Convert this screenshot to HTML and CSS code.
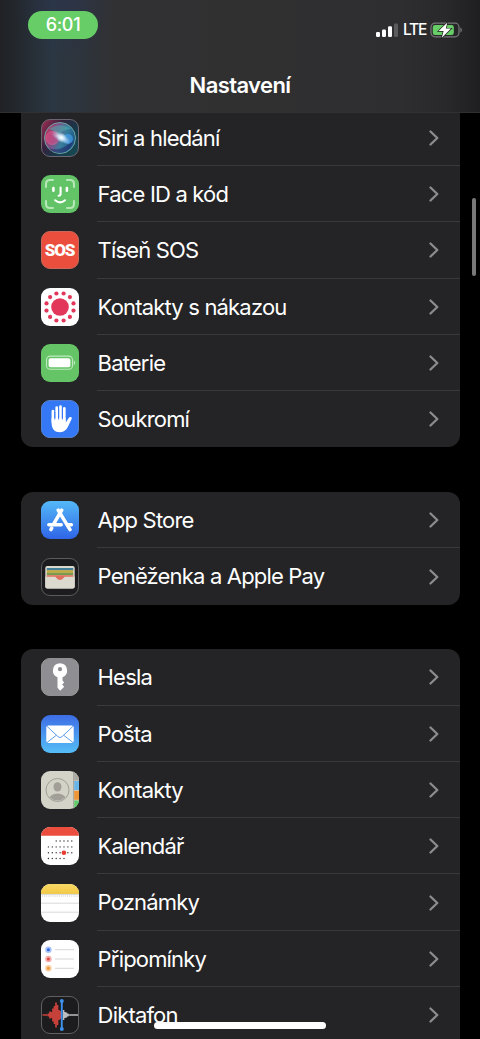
FILE: index.html
```html
<!DOCTYPE html>
<html lang="cs">

<head>
    <meta charset="UTF-8">
    <meta name="viewport" content="width=device-width, initial-scale=1.0">
    <title>Nastavení</title>
    <link rel="stylesheet" href="styles.css">
</head>

<body>
    <header class="header">
        <div class="status-bar">
            <span class="time">6:01</span>
            <div class="status-icons">
                <svg class="signal" width="22" height="15" viewBox="0 0 22 15">
                    <rect x="0" y="9" width="4" height="5" rx="1.2" fill="#fff" />
                    <rect x="6" y="6.5" width="4" height="7.5" rx="1.2" fill="#fff" />
                    <rect x="12" y="3.3" width="4" height="10.7" rx="1.2" fill="#fff" />
                    <rect x="18" y="0.5" width="4" height="13.5" rx="1.2" fill="#5b5b5e" />
                </svg>
                <span class="network">LTE</span>
                <svg width="33" height="18" viewBox="0 0 33 18">
                    <rect x="1" y="2.2" width="28" height="13.6" rx="4" fill="none" stroke="#77777a" stroke-width="1.2" />
                    <path d="M30.4 6.5c2 .8 2 4.2 0 5z" fill="#77777a" />
                    <rect x="2.8" y="4" width="21" height="10" rx="2.2" fill="#67ce67" />
                    <path d="M17.4 1.5L8.6 10h5l-1.8 6.7L21 7.6h-5.2z" fill="#fff" stroke="#222" stroke-width="1.4" paint-order="stroke" />
                </svg>
            </div>
        </div>
        <h1 class="title">Nastavení</h1>
    </header>

    <main class="settings">
        <section class="group">
            <a class="row">
                <svg class="icon" viewBox="0 0 38 38">
                    <defs>
                        <linearGradient id="siri-bg" x1="0" y1="0" x2="1" y2=".7">
                            <stop offset="0" stop-color="#a72e53" />
                            <stop offset=".4" stop-color="#35223e" />
                            <stop offset=".7" stop-color="#183747" />
                            <stop offset="1" stop-color="#174751" />
                        </linearGradient>
                        <linearGradient id="siri-orb" x1="0" y1=".3" x2="1" y2=".7">
                            <stop offset="0" stop-color="#bd315c" />
                            <stop offset=".35" stop-color="#77548a" />
                            <stop offset=".6" stop-color="#387f9c" />
                            <stop offset="1" stop-color="#164c82" />
                        </linearGradient>
                        <radialGradient id="siri-glow">
                            <stop offset="0" stop-color="#fff" />
                            <stop offset=".3" stop-color="#e1f3ff" stop-opacity=".8" />
                            <stop offset="1" stop-color="#b4d6ed" stop-opacity="0" />
                        </radialGradient>
                    </defs>
                    <rect x=".5" y=".5" width="37" height="37" rx="8.5" fill="url(#siri-bg)" stroke="#6c6573" />
                    <circle cx="19" cy="19" r="15.5" fill="url(#siri-orb)" stroke="#6ba3a3" stroke-width="1" />
                    <path d="M7 29c8 3 17 1 25-8-1 8-7 13-13 13-5 0-9-2-12-5z" fill="#231c62" opacity=".5" />
                    <path d="M8 10c7-5 15-5 22 0-6 0-9 2-12 7-3-4-6-6-10-7z" fill="#4caeae" opacity=".55" />
                    <circle cx="11.5" cy="19" r="6.5" fill="#ea4b87" fill-opacity=".5" stroke="#d66c95" stroke-width=".6" />
                    <circle cx="27" cy="20" r="5" fill="#4aa5f3" opacity=".65" />
                    <ellipse cx="20" cy="18.5" rx="11" ry="4.5" transform="rotate(30 20 18.5)" fill="url(#siri-glow)" />
                    <circle cx="20.5" cy="18.5" r="5" fill="url(#siri-glow)" />
                </svg>
                <span class="label">Siri a hledání</span>
                <svg class="chevron" viewBox="0 0 10 16"><path d="M1.5 1.5L8.3 8l-6.8 6.5" /></svg>
            </a>
            <a class="row">
                <svg class="icon" viewBox="0 0 38 38">
                    <rect width="38" height="38" rx="9" fill="#62c466" />
                    <g fill="none" stroke-linecap="round">
                        <path d="M5 12V9q0-4 4-4h3M26 5h3q4 0 4 4v3M33 26v3q0 4-4 4h-3M12 33H9q-4 0-4-4v-3" stroke="#b6e7b7" stroke-width="2.1" />
                        <path d="M12.4 13v2.8M25.9 13v2.8" stroke="#fff" stroke-width="2.6" />
                        <path d="M19.6 12.5v6.2q0 2-2 2M14.2 25.3q4.9 4.3 9.8 0" stroke="#fff" stroke-width="2.1" />
                    </g>
                </svg>
                <span class="label">Face ID a kód</span>
                <svg class="chevron" viewBox="0 0 10 16"><path d="M1.5 1.5L8.3 8l-6.8 6.5" /></svg>
            </a>
            <a class="row">
                <div class="icon sos">SOS</div>
                <span class="label">Tíseň SOS</span>
                <svg class="chevron" viewBox="0 0 10 16"><path d="M1.5 1.5L8.3 8l-6.8 6.5" /></svg>
            </a>
            <a class="row">
                <svg class="icon" viewBox="0 0 38 38">
                    <rect width="38" height="38" rx="9" fill="#fff" />
                    <g fill="#e2375b">
                        <circle cx="19" cy="19" r="8.8" />
                        <circle cx="22.6" cy="5.5" r="2.1" />
                        <circle cx="28.9" cy="9.1" r="2.1" />
                        <circle cx="32.5" cy="15.4" r="2.1" />
                        <circle cx="32.5" cy="22.6" r="2.1" />
                        <circle cx="28.9" cy="28.9" r="2.1" />
                        <circle cx="22.6" cy="32.5" r="2.1" />
                        <circle cx="15.4" cy="32.5" r="2.1" />
                        <circle cx="9.1" cy="28.9" r="2.1" />
                        <circle cx="5.5" cy="22.6" r="2.1" />
                        <circle cx="5.5" cy="15.4" r="2.1" />
                        <circle cx="9.1" cy="9.1" r="2.1" />
                        <circle cx="15.4" cy="5.5" r="2.1" />
                    </g>
                </svg>
                <span class="label">Kontakty s nákazou</span>
                <svg class="chevron" viewBox="0 0 10 16"><path d="M1.5 1.5L8.3 8l-6.8 6.5" /></svg>
            </a>
            <a class="row">
                <svg class="icon" viewBox="0 0 38 38">
                    <rect width="38" height="38" rx="9" fill="#65c466" />
                    <rect x="5.5" y="12.1" width="26" height="13.2" rx="3.8" fill="none" stroke="#c0e9c1" stroke-width="1.1" />
                    <rect x="7.6" y="14.2" width="21.8" height="9" rx="1.8" fill="#fff" />
                    <path d="M32.8 16.5c1.9.7 1.9 3.8 0 4.5z" fill="#c0e9c1" />
                </svg>
                <span class="label">Baterie</span>
                <svg class="chevron" viewBox="0 0 10 16"><path d="M1.5 1.5L8.3 8l-6.8 6.5" /></svg>
            </a>
            <a class="row">
                <svg class="icon" viewBox="0 0 38 38">
                    <rect x=".4" y=".4" width="37.2" height="37.2" rx="8.6" fill="#3478f6" stroke="#6390df" stroke-width=".8" />
                    <g fill="none" stroke="#fff" stroke-width="2.7" stroke-linecap="round">
                        <path d="M11.9 11.2V22M15.7 7.6V20M19.5 6.6V20M23.3 8.3V22" />
                    </g>
                    <path d="M10.6 18h14v4.8l2.6-4.1c.9-1.6 1.8-2 3-1.4.9.4.7 1 .3 1.9l-3.3 7.1c-1.7 3.7-4.2 5.9-8.3 5.9-5.2 0-8.3-3.3-8.3-9z" fill="#fff" />
                    <path d="M13.8 12v7.6M17.6 9v10.5M21.4 9v10.5" stroke="#3478f6" stroke-width=".9" />
                </svg>
                <span class="label">Soukromí</span>
                <svg class="chevron" viewBox="0 0 10 16"><path d="M1.5 1.5L8.3 8l-6.8 6.5" /></svg>
            </a>
        </section>

        <section class="group">
            <a class="row">
                <svg class="icon" viewBox="0 0 38 38">
                    <defs>
                        <linearGradient id="store" x1="0" y1="0" x2="0" y2="1">
                            <stop offset="0" stop-color="#54b9f8" />
                            <stop offset="1" stop-color="#2f65e7" />
                        </linearGradient>
                    </defs>
                    <rect width="38" height="38" rx="9" fill="url(#store)" />
                    <g fill="none" stroke="#fff" stroke-width="3.5" stroke-linecap="round">
                        <path d="M20.7 9.2L12.9 22.6M17.2 9.2L29 28.6M10.7 27.2l-.8 1.4" />
                        <path d="M7.8 23.8h12.4M26.4 23.8h4" />
                    </g>
                </svg>
                <span class="label">App Store</span>
                <svg class="chevron" viewBox="0 0 10 16"><path d="M1.5 1.5L8.3 8l-6.8 6.5" /></svg>
            </a>
            <a class="row">
                <svg class="icon" viewBox="0 0 38 38">
                    <rect x=".5" y=".5" width="37" height="37" rx="8.5" fill="#1c1c1e" stroke="#5b5b5d" />
                    <rect x="4.3" y="8" width="29.4" height="22.5" rx="2" fill="#dcd9cf" />
                    <path d="M5.8 10h26.4v2.4H5.8z" fill="#437f99" />
                    <path d="M5.8 12.2h26.4v2.6H5.8z" fill="#c3a83d" />
                    <path d="M5.8 14.8h26.4v2.4H5.8z" fill="#759b4b" />
                    <path d="M5.8 17.2h26.4v3H5.8z" fill="#df705e" />
                    <path d="M4.3 18.8h9.9c1.3 0 1.2 3 4.8 3s3.5-3 4.8-3h9.9v9.7q0 2-2 2H6.3q-2 0-2-2z" fill="#dcd9cf" />
                    <path d="M14.3 18.5h9.4c-1 0-1.7 3.5-4.7 3.5s-3.7-3.5-4.7-3.5z" fill="#df705e" />
                </svg>
                <span class="label">Peněženka a Apple Pay</span>
                <svg class="chevron" viewBox="0 0 10 16"><path d="M1.5 1.5L8.3 8l-6.8 6.5" /></svg>
            </a>
        </section>

        <section class="group">
            <a class="row">
                <svg class="icon" viewBox="0 0 38 38">
                    <rect x=".4" y=".4" width="37.2" height="37.2" rx="8.6" fill="#8e8e93" stroke="#a4a4a7" stroke-width=".8" />
                    <path fill-rule="evenodd" d="M19 5.3a7.2 7.2 0 0 0-2.5 13.9v10.5l2.7 3 4-4-2.1-2.2 2.1-2.1-1.7-1.8v-3.4A7.2 7.2 0 0 0 19 5.3zm0 3.8a2.1 2.1 0 1 1 0 4.2 2.1 2.1 0 0 1 0-4.2z" fill="#fff" />
                </svg>
                <span class="label">Hesla</span>
                <svg class="chevron" viewBox="0 0 10 16"><path d="M1.5 1.5L8.3 8l-6.8 6.5" /></svg>
            </a>
            <a class="row">
                <svg class="icon" viewBox="0 0 38 38">
                    <defs>
                        <linearGradient id="mail" x1="0" y1="0" x2="0" y2="1">
                            <stop offset="0" stop-color="#3d6de5" />
                            <stop offset="1" stop-color="#55bdf7" />
                        </linearGradient>
                    </defs>
                    <rect width="38" height="38" rx="9" fill="url(#mail)" />
                    <rect x="5.3" y="10.5" width="27.4" height="17.6" rx="2" fill="#fff" />
                    <path d="M6 11.3l11 10.4q2 1.8 4 0l11-10.4M6 27.5l9.4-7.3M32 27.5l-9.4-7.3" fill="none" stroke="#4f94e2" stroke-width=".9" />
                </svg>
                <span class="label">Pošta</span>
                <svg class="chevron" viewBox="0 0 10 16"><path d="M1.5 1.5L8.3 8l-6.8 6.5" /></svg>
            </a>
            <a class="row">
                <svg class="icon" viewBox="0 0 38 38">
                    <defs>
                        <clipPath id="tile"><rect width="38" height="38" rx="9" /></clipPath>
                        <clipPath id="avatar"><circle cx="16.5" cy="19" r="10.6" /></clipPath>
                    </defs>
                    <g clip-path="url(#tile)">
                        <path d="M0 0h38v38H0z" fill="#d4d3c8" />
                        <path d="M32 0h1.2v38H32z" fill="#aaa9a1" />
                        <path d="M33.2 0H38v9.6h-4.8z" fill="#aaa9a2" />
                        <path d="M33.2 10.1H38v9h-4.8z" fill="#69b4e9" />
                        <path d="M33.2 19.8H38v9h-4.8z" fill="#ee9636" />
                        <path d="M33.2 29.4H38V38h-4.8z" fill="#62cc6b" />
                    </g>
                    <circle cx="16.5" cy="19" r="11.5" fill="none" stroke="#a19f98" stroke-width="1" />
                    <g fill="#a19f98" clip-path="url(#avatar)">
                        <ellipse cx="16.5" cy="15.9" rx="4" ry="4.7" />
                        <ellipse cx="16.5" cy="28.3" rx="8.4" ry="5.7" />
                    </g>
                </svg>
                <span class="label">Kontakty</span>
                <svg class="chevron" viewBox="0 0 10 16"><path d="M1.5 1.5L8.3 8l-6.8 6.5" /></svg>
            </a>
            <a class="row">
                <svg class="icon" viewBox="0 0 38 38">
                    <g clip-path="url(#tile)">
                        <path d="M0 0h38v38H0z" fill="#fff" />
                        <path d="M0 0h38v8.8H0z" fill="#eb4e3d" />
                    </g>
                    <g fill="none" stroke="#333" stroke-width="1.4" stroke-linecap="round">
                        <path d="M15.2 14h17" stroke-dasharray="0 3.9" />
                        <path d="M7.4 19.9h25M7.4 25.7h25" stroke-dasharray="0 3.9" />
                        <path d="M7.4 31.5h16.5" stroke-dasharray="0 3.9" />
                    </g>
                    <circle cx="22.9" cy="25.7" r="2.3" fill="#e93b30" />
                </svg>
                <span class="label">Kalendář</span>
                <svg class="chevron" viewBox="0 0 10 16"><path d="M1.5 1.5L8.3 8l-6.8 6.5" /></svg>
            </a>
            <a class="row">
                <svg class="icon" viewBox="0 0 38 38">
                    <defs>
                        <linearGradient id="notes" x1="0" y1="0" x2="0" y2="1">
                            <stop offset="0" stop-color="#f9d966" />
                            <stop offset="1" stop-color="#f2c944" />
                        </linearGradient>
                    </defs>
                    <g clip-path="url(#tile)">
                        <path d="M0 0h38v38H0z" fill="#fff" />
                        <path d="M0 0h38v10H0z" fill="url(#notes)" />
                        <path d="M0 10.4h38M0 19.2h38M0 28.2h38" stroke="#cfcfcf" stroke-width=".8" />
                        <path d="M1 12h37" stroke="#aaa" stroke-width=".8" stroke-dasharray=".8 1.3" />
                    </g>
                </svg>
                <span class="label">Poznámky</span>
                <svg class="chevron" viewBox="0 0 10 16"><path d="M1.5 1.5L8.3 8l-6.8 6.5" /></svg>
            </a>
            <a class="row">
                <svg class="icon" viewBox="0 0 38 38">
                    <rect width="38" height="38" rx="9" fill="#fff" />
                    <path d="M14 9.7h19M14 19h19M14 28.3h19" stroke="#d1d1d3" stroke-width=".9" />
                    <g stroke-width="1.7">
                        <circle cx="7.4" cy="9.7" r="2.4" fill="#3369e6" stroke="#abc3f8" />
                        <circle cx="7.4" cy="19" r="2.4" fill="#e44a45" stroke="#f4b0ae" />
                        <circle cx="7.4" cy="28.3" r="2.4" fill="#ef973c" stroke="#f8d0a2" />
                    </g>
                </svg>
                <span class="label">Připomínky</span>
                <svg class="chevron" viewBox="0 0 10 16"><path d="M1.5 1.5L8.3 8l-6.8 6.5" /></svg>
            </a>
            <a class="row">
                <svg class="icon" viewBox="0 0 38 38">
                    <rect x=".5" y=".5" width="37" height="37" rx="8.5" fill="#1c1c1e" stroke="#606062" />
                    <path d="M1.5 19h5M7.5 17.5v3M9 15.5v7M10.5 16v6M12 12.5v13M13.5 10v18M15 6.5v25M16.5 9v20M18 14v10M19.5 15v8" stroke="#c7413b" stroke-width="1.7" />
                    <path d="M22.6 14v10M24 16v6M25.4 16.5v5M26.8 17.5v3M28.2 18.2v1.6M29 19h8" stroke="#bdbdbf" stroke-width="1.5" />
                    <path d="M20.8 5v28" stroke="#3d91ea" stroke-width="1.9" />
                    <circle cx="20.8" cy="5" r="2" fill="#3d91ea" />
                    <circle cx="20.8" cy="33" r="2" fill="#3d91ea" />
                </svg>
                <span class="label">Diktafon</span>
                <svg class="chevron" viewBox="0 0 10 16"><path d="M1.5 1.5L8.3 8l-6.8 6.5" /></svg>
            </a>
        </section>
    </main>

    <div class="scrollbar"></div>
    <div class="home-indicator"></div>
</body>

</html>
```
FILE: styles.css
```css
* {
    box-sizing: border-box;
}

body {
    margin: 0;
    height: 100vh;
    overflow: hidden;
    background-color: #000;
    color: #fff;
    font-family: Inter, "Liberation Sans", sans-serif;
}

.header {
    position: fixed;
    top: 0;
    left: 0;
    z-index: 1;
    width: 100%;
    height: 113px;
    border-bottom: 1px solid #303032;
    background-image:
        radial-gradient(ellipse 50px 60px at 65px 0, rgba(44, 50, 90, 0.35), transparent),
        linear-gradient(to right, #202225 0, #24292f 20px, #2b3742 52px, #2d343c 80px, #313133 112px, #303031 240px, #2e2e30 400px, #29292b 445px, #1f1f21 480px);
}

.status-bar {
    display: flex;
    justify-content: space-between;
    align-items: flex-start;
    padding: 11px 17px 0 28px;
}

.time {
    width: 70px;
    height: 28px;
    border-radius: 14px;
    background-color: #66cd67;
    font-size: 18px;
    font-weight: 500;
    line-height: 28px;
    letter-spacing: -0.3px;
    text-align: center;
}

.status-icons {
    display: flex;
    align-items: center;
    gap: 5px;
    padding-top: 9px;
}

.network {
    width: 22px;
    font-size: 15.5px;
    font-weight: 500;
    line-height: 20px;
    letter-spacing: -1.2px;
}

.title {
    margin: 32px 0 0;
    font-size: 22px;
    font-weight: 600;
    line-height: 26px;
    letter-spacing: -0.6px;
    text-align: center;
}

.settings {
    display: flex;
    flex-direction: column;
    gap: 44.6px;
    padding: 109.7px 20px 0 20.5px;
}

.group {
    border-radius: 12px;
    background-color: #242426;
}

/* These two run on past the edge of the screen */
.group:first-child {
    border-top-left-radius: 0;
    border-top-right-radius: 0;
}

.group:last-child {
    border-bottom-left-radius: 0;
    border-bottom-right-radius: 0;
}

.row {
    display: grid;
    grid-template-columns: 38px 1fr 10px;
    align-items: center;
    height: 56.3px;
    padding: 0 21px 0 20px;
}

.icon {
    width: 38px;
    height: 38px;
}

.label {
    height: 56.3px;
    margin-left: 18.5px;
    margin-right: -31px;
    padding-left: 0.6px;
    font-size: 22px;
    line-height: 57.2px;
    letter-spacing: -0.82px;
    white-space: nowrap;
    border-bottom: 1px solid #39393b;
}

.row:last-child .label {
    border-bottom: none;
}

.chevron {
    width: 10px;
    height: 16px;
    fill: none;
    stroke: #8c8c90;
    stroke-width: 2.3;
    stroke-linecap: round;
    stroke-linejoin: round;
}

.sos {
    border: 1px solid #c9675c;
    border-radius: 9px;
    background-color: #eb4e3d;
    font-family: Roboto, Inter, sans-serif;
    font-size: 17px;
    font-weight: 900;
    line-height: 37px;
    letter-spacing: -1.2px;
    text-align: center;
}

.scrollbar {
    position: fixed;
    top: 198px;
    right: 4px;
    width: 4px;
    height: 78px;
    border-radius: 2px;
    background-color: #79797a;
}

.home-indicator {
    position: fixed;
    bottom: 10px;
    left: 154px;
    width: 172px;
    height: 7px;
    border-radius: 4px;
    background-color: #fff;
}
```
